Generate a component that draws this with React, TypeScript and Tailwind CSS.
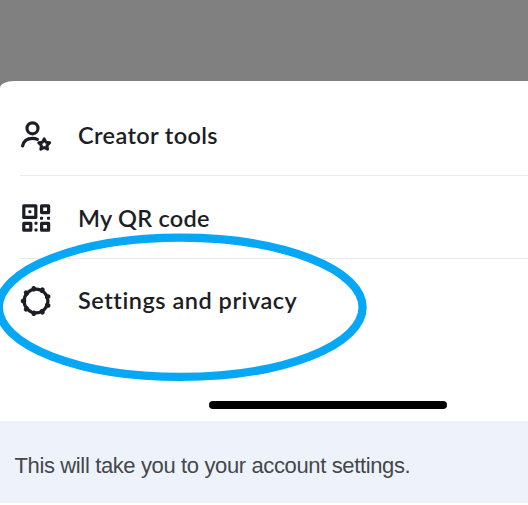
import type { ReactNode } from "react";

const INK = "#1d1e25";

function CreatorIcon() {
  return (
    <svg width="32" height="32" viewBox="0 0 32 32" fill="none" stroke={INK} strokeWidth="3.2" strokeLinecap="round" strokeLinejoin="round">
      <circle cx="12.5" cy="8.3" r="5.5" />
      <path d="M2.6 26C3.6 21.2 7 18.4 12.4 18.4c2 0 3.6.3 5 1" />
      <path d="M24.2 18.8l1.7 3.4 3.8.6-2.7 2.7.6 3.8-3.4-1.8-3.4 1.8.6-3.8-2.7-2.7 3.8-.6z" strokeWidth="2.9" />
    </svg>
  );
}

function QrIcon() {
  return (
    <svg width="32" height="32" viewBox="0 0 32 32" fill="none" stroke={INK} strokeWidth="3.2" strokeLinejoin="round">
      <rect x="3.8" y="3.8" width="12" height="11.6" />
      <rect x="21.6" y="3.8" width="7" height="6.8" />
      <rect x="3.8" y="21.4" width="7" height="6.8" />
      <rect x="21.6" y="21.4" width="7" height="6.8" />
      <g fill={INK} stroke="none">
        <rect x="8.4" y="8.2" width="3" height="3" rx=".8" />
        <rect x="20" y="14.8" width="3" height="3" rx=".8" />
        <rect x="27" y="14.8" width="3" height="3" rx=".8" />
        <rect x="14.5" y="19.8" width="3" height="3" rx=".8" />
        <rect x="14.5" y="26.6" width="3" height="3" rx=".8" />
      </g>
    </svg>
  );
}

const TEETH = [20, 60, 100, 140, 180, 220, 260, 300, 340];

function GearIcon() {
  return (
    <svg width="32" height="32" viewBox="0 0 32 32" fill="none" stroke={INK}>
      <circle cx="16" cy="16" r="11.9" strokeWidth="3.2" />
      {TEETH.map((a) => (
        <path key={a} d="M27.8 16h1.3" strokeWidth="4.4" strokeLinecap="round" transform={`rotate(${a} 16 16)`} />
      ))}
    </svg>
  );
}

function Row({ icon, label, className }: { icon: ReactNode; label: string; className: string }) {
  return (
    <div className="flex h-full items-center gap-[26px]">
      <span className="block w-8 shrink-0">{icon}</span>
      <span className={`whitespace-nowrap font-['Lato',sans-serif] text-[23.5px] font-semibold leading-8 text-[#1d1e25] ${className}`}>{label}</span>
    </div>
  );
}

export default function App() {
  return (
    <div className="h-[505px] w-[528px] overflow-hidden bg-white">
      <div className="bg-[#808080] pt-[81px]">
        <section className="relative h-[340px] overflow-hidden bg-white pl-5 [border-top-left-radius:14px_7px]">
          <div className="h-[95px] border-b border-[#ebebeb] pt-[15px]">
            <Row icon={<CreatorIcon />} label="Creator tools" className="pb-0.5 tracking-[0.36px]" />
          </div>
          <div className="h-[83px] border-b border-[#ebebeb] pt-[2px]">
            <Row icon={<QrIcon />} label="My QR code" className="tracking-[0.25px]" />
          </div>
          <div className="h-[83px]">
            <Row icon={<GearIcon />} label="Settings and privacy" className="pb-0.5 tracking-[0.52px]" />
          </div>
          <div className="ml-[189px] mt-[59px] h-2 w-[238px] rounded-full bg-black" />
          <svg className="pointer-events-none absolute left-0 top-0" width="528" height="340" viewBox="0 81 528 340" fill="none">
            <ellipse cx="180.7" cy="307.3" rx="181.9" ry="69.6" stroke="#06a7f5" strokeWidth="8.3" />
          </svg>
        </section>
      </div>
      <div className="flex h-[82px] items-center bg-[#eef3fb] pb-px pl-[14.5px] pt-[9px]">
        <p className="whitespace-nowrap font-['Liberation_Sans',Arial,sans-serif] text-[22px] leading-8 tracking-[-0.37px] text-[#44474b]">
          This will take you to your account settings.
        </p>
      </div>
    </div>
  );
}
